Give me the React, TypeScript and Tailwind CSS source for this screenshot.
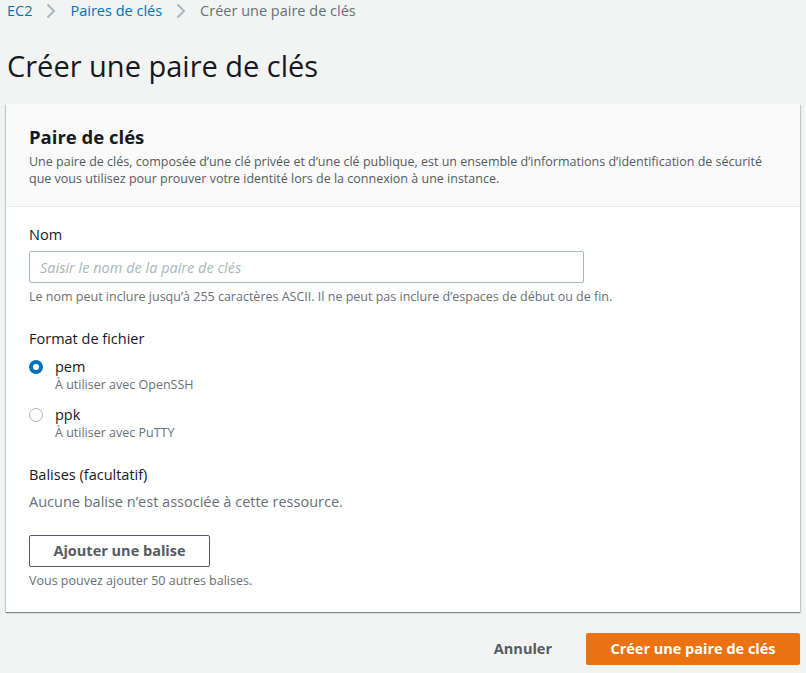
import { useState } from "react"

const font = "font-['Open_Sans','Noto_Sans',sans-serif]"

const Chevron = () => (
	<svg width="14" height="18" viewBox="0 0 14 18" className="shrink-0 text-[#aab7b8]">
		<path d="M3.5 2.5 L10 9 L3.5 15.5" fill="none" stroke="currentColor" strokeWidth="2" />
	</svg>
)

const Radio = ({ checked }: { checked: boolean }) =>
	checked ? (
		<span className="mt-[3px] h-[14px] w-[14px] shrink-0 rounded-full border-[4px] border-[#0073bb] bg-white" />
	) : (
		<span className="mt-[3px] h-[14px] w-[14px] shrink-0 rounded-full border border-[#aab7b8] bg-white" />
	)

export default function App() {
	const [format, setFormat] = useState("pem")

	return (
		<div className={`${font} min-h-[673px] bg-[#f2f3f3] px-[6px] text-[#16191f]`}>
			{/* breadcrumbs */}
			<nav className="flex h-[22px] items-center gap-[12px] pl-[1px] text-[14.5px]">
				<span className="text-[#0073bb]">EC2</span>
				<Chevron />
				<span className="text-[#0073bb]">Paires de clés</span>
				<Chevron />
				<span className="text-[#687078]">Créer une paire de clés</span>
			</nav>

			<h1 className="mt-[26px] pl-[1px] text-[29px] leading-[36px] font-normal">Créer une paire de clés</h1>

			<div className="mt-[20px] bg-white shadow-[0_1px_1px_0_rgba(0,28,36,0.3),1px_1px_1px_0_rgba(0,28,36,0.15),-1px_1px_1px_0_rgba(0,28,36,0.15)]">
				<div className="border-b border-[#eaeded] bg-[#fafafa] px-[23px] pt-[21px] pb-[19px]">
					<h2 className="text-[18.5px] leading-[24px] font-bold">Paire de clés</h2>
					<p className="mt-[4px] text-[12.5px] leading-[17px] text-[#545b64]">
						Une paire de clés, composée d’une clé privée et d’une clé publique, est un ensemble d’informations d’identification de sécurité que vous utilisez pour prouver votre identité lors de la connexion à une instance.
					</p>
				</div>

				<div className="px-[23px] pt-[18px] pb-[23px]">
					<label className="block text-[14.5px] leading-[20px]">Nom</label>
					<input
						className="mt-[6px] block h-[32px] w-[555px] rounded-[2px] border border-[#aab7b8] px-[10px] text-[14.5px] placeholder:text-[#aab7b8] placeholder:italic outline-none"
						placeholder="Saisir le nom de la paire de clés"
					/>
					<p className="mt-[6px] text-[12.5px] leading-[16px] text-[#687078]">
						Le nom peut inclure jusqu’à 255 caractères ASCII. Il ne peut pas inclure d’espaces de début ou de fin.
					</p>

					<div className="mt-[24px] text-[14.5px] leading-[20px]">Format de fichier</div>
					<div className="mt-[8px] flex flex-col gap-[12px]">
						{[
							{ id: "pem", desc: "À utiliser avec OpenSSH" },
							{ id: "ppk", desc: "À utiliser avec PuTTY" },
						].map((o) => (
							<div key={o.id} className="flex cursor-pointer gap-[12px]" onClick={() => setFormat(o.id)}>
								<Radio checked={format === o.id} />
								<div>
									<div className="text-[14.5px] leading-[20px]">{o.id}</div>
									<div className="text-[12.5px] leading-[16px] text-[#687078]">{o.desc}</div>
								</div>
							</div>
						))}
					</div>

					<div className="mt-[24px] text-[14.5px] leading-[20px]">Balises (facultatif)</div>
					<p className="mt-[7px] text-[14.5px] leading-[20px] text-[#687078]">Aucune balise n’est associée à cette ressource.</p>
					<button className="mt-[23px] block h-[32px] w-[181px] rounded-[2px] border border-[#545b64] bg-white text-[14.5px] font-bold text-[#545b64]">
						Ajouter une balise
					</button>
					<p className="mt-[6px] text-[12.5px] leading-[16px] text-[#687078]">Vous pouvez ajouter 50 autres balises.</p>
				</div>
			</div>

			<div className="mt-[21px] flex items-center justify-end gap-[20px]">
				<button className="px-[14px] text-[14.5px] font-bold text-[#545b64]">Annuler</button>
				<button className="h-[32px] w-[214px] rounded-[2px] bg-[#ec7211] text-[14.5px] font-bold text-white">Créer une paire de clés</button>
			</div>
		</div>
	)
}
